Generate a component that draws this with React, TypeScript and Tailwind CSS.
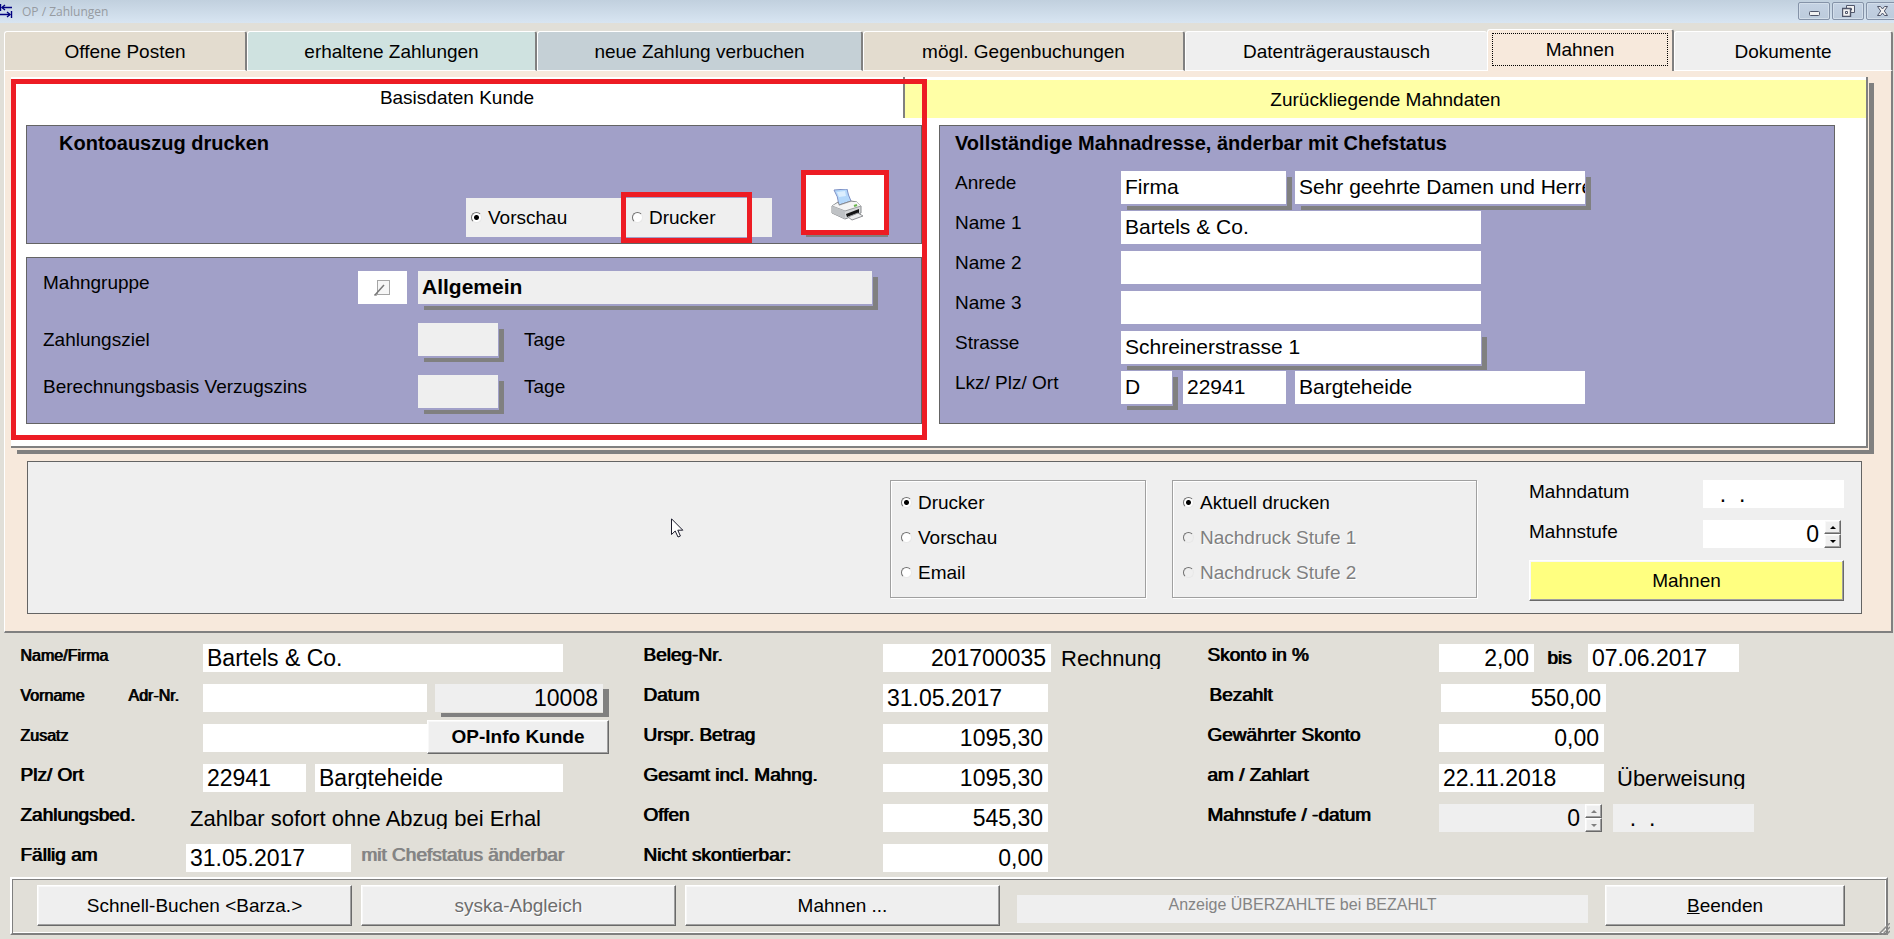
import type { InputHTMLAttributes, ReactNode } from "react";
import clsx from "clsx";

const tabs = [
  { name: "Offene Posten", color: "bg-[#e3dccf]" },
  { name: "erhaltene Zahlungen", color: "bg-[#cfe2e0]" },
  { name: "neue Zahlung verbuchen", color: "bg-[#c5d0d6]" },
  { name: "mögl. Gegenbuchungen", color: "bg-[#e3dccf]" },
  { name: "Datenträgeraustausch", color: "bg-[#efefef]" },
  { name: "Mahnen", color: "bg-[#f7e9dc]", active: true },
  { name: "Dokumente", color: "bg-[#efefef]" },
];

const panel = "border border-[#646464] bg-[#a1a0c8]";
const raised =
  "border border-t-white border-l-white border-r-[#696969] border-b-[#696969] bg-[#efefef] shadow-[inset_-1px_-1px_0_#a0a0a0,inset_1px_1px_0_#f8f8f8]";
const panelShadow = "shadow-[1px_2px_0_#a1a0c8,6px_6px_0_#808080]";
const heavy = "[text-shadow:1px_0_0_currentColor]";

type FieldProps = InputHTMLAttributes<HTMLInputElement>;

const Field = ({ className, ...props }: FieldProps) => (
  <input
    type="text"
    className={clsx("block h-[33px] pb-[2px] pl-1 text-[21px] outline-none", className)}
    {...props}
  />
);

// Low field of the lower form, the bottom border cuts the descenders
const LowField = ({ className, ...props }: FieldProps) => (
  <input
    type="text"
    className={clsx(
      "block h-7 border-b-[3px] pt-[3px] pr-[5px] pl-1 text-[23px] leading-[26px] outline-none",
      className
    )}
    {...props}
  />
);

const LowText = ({ children }: { children: ReactNode }) => (
  <output className="block h-[25px] overflow-hidden pt-[2px] pl-1 text-[22px] leading-[26px] whitespace-nowrap">
    {children}
  </output>
);

const LowLabel = ({ id, children, className }: { id?: string; children: ReactNode; className: string }) => (
  <label htmlFor={id} className={clsx("shrink-0 whitespace-nowrap", heavy, className)}>
    {children}
  </label>
);

const Radio = ({ name, label, checked, disabled }: { name: string; label: string; checked?: boolean; disabled?: boolean }) => (
  <label className={clsx("flex items-center gap-[6px]", disabled && "text-[#7f7f7f] [text-shadow:1px_1px_0_#fff]")}>
    <input
      type="radio"
      name={name}
      defaultChecked={checked}
      disabled={disabled}
      className="h-[11px] w-[11px] shrink-0 appearance-none rounded-full border border-t-[#707070] border-r-[#e8e8e8] border-b-[#e8e8e8] border-l-[#707070] bg-white checked:bg-[radial-gradient(circle,#000_2px,#fff_3px)] disabled:bg-[#efefef]"
    />
    {label}
  </label>
);

const Spinner = ({ disabled }: { disabled?: boolean }) => (
  <div className="flex h-7 w-[17px] flex-col">
    {["M0 3 L3 0 L6 3Z", "M0 0 L3 3 L6 0Z"].map((d, i) => (
      <button
        key={d}
        disabled={disabled}
        aria-label={i === 0 ? "Mehr" : "Weniger"}
        className={clsx("flex flex-1 items-center justify-center", raised)}
      >
        <svg width="6" height="3" viewBox="0 0 6 3">
          <path d={d} fill={disabled ? "#808080" : "#000"} />
        </svg>
      </button>
    ))}
  </div>
);

const PrinterIcon = () => (
  <svg width="32" height="32" viewBox="0 0 32 32">
    <path d="M3 1 L16 0 Q17 6 20 12 L8 16 Q7 7 3 1Z" fill="#b4d8fb" stroke="#7d8fc4" />
    <path d="M6 3 L14 2 L15 7 L8 8Z" fill="#dceefe" />
    <path d="M1 17 L7 13 L8 16 L20 12 L26 13 L30 17 L30 24 L14 30 L1 24Z" fill="#d5d7d9" stroke="#8a8c8f" />
    <path d="M1 17 L7 14 L8 17 L20 13 L26 13 L30 17 L14 22Z" fill="#f5f5f5" />
    <path d="M1 17 L14 22 L30 17" fill="none" stroke="#9a9c9f" />
    <path d="M14 22 L14 30 L1 24 L1 17Z" fill="#bfc2c5" />
    <path d="M15 25 L28 20 L28 24 L16 28Z" fill="#151515" />
    <path d="M17 28 L27 24 L32 27 L21 31Z" fill="#eceded" stroke="#909295" />
    <path d="M23 17 L26 16" stroke="#69b54c" strokeWidth="2" />
  </svg>
);

const TitleBar = () => (
  <header className="flex h-[23px] overflow-hidden bg-linear-to-b from-[#c1d0de] to-[#d8e5f2]">
    <svg className="mt-[4px]" width="13" height="15" viewBox="0 0 13 15" fill="none" stroke="#000080">
      <path d="M0.5 0 V7 M2 3.5 H12 M11.5 7 V14 M0 10.5 H10" strokeWidth="1.4" />
      <path d="M5 1 L2 3.5 L5 6 M7 8 L10 10.5 L7 13" strokeWidth="1.4" />
    </svg>
    <h1 className="ml-[9px] font-['Open_Sans',sans-serif] text-[12px] leading-[24px] text-[#969ba1]">OP / Zahlungen</h1>
    <div className="mt-[2px] -mr-1 ml-auto flex gap-[2px]">
      {["min", "restore", "close"].map((kind) => (
        <button
          key={kind}
          aria-label={kind}
          className="flex h-[18px] w-8 items-center justify-center rounded-[2px] border border-[#8593a8] bg-linear-to-b from-[#c4d2e3] to-[#bccbdc] shadow-[inset_0_0_0_1px_#d3deea]"
        >
          <svg width="13" height="12" viewBox="0 0 13 12" fill="#f2f2f2" stroke="#50566a">
            {kind === "min" && <rect x="1.5" y="6.5" width="10" height="4" rx="1" />}
            {kind === "restore" && (
              <>
                <path d="M4.5 0.5 H12.5 V7.5 H4.5Z M7.5 3.5 H9.5 V5 H7.5Z" />
                <path d="M0.5 3.5 H8.5 V11.5 H0.5Z" strokeWidth="1.4" />
                <path d="M3.5 6.5 H5.5 V8.5 H3.5Z" />
              </>
            )}
            {kind === "close" && (
              <path d="M1.5 1.5 H4.5 L6.5 4 L8.5 1.5 H11.5 L8.3 6 L11.5 10.5 H8.5 L6.5 8 L4.5 10.5 H1.5 L4.7 6Z" />
            )}
          </svg>
        </button>
      ))}
    </div>
  </header>
);

const CustomerPanels = () => (
  <div className="flex flex-col gap-[13px]">
    {/* Kontoauszug */}
    <section className={clsx("flex flex-col justify-between pt-[5px] pr-[33px] pb-[6px] pl-8", panel)}>
      <h2 className="text-[20px] leading-6 font-bold">Kontoauszug drucken</h2>
      <div className="mt-5 flex items-end justify-end gap-[34px]">
        <div className="flex h-[39px] w-[306px] bg-[#efefef] pl-[5px]">
          <div className="flex w-[161px]">
            <Radio name="auszug" label="Vorschau" checked />
          </div>
          <div className="relative flex">
            <Radio name="auszug" label="Drucker" />
            <div className="pointer-events-none absolute -top-[6px] -bottom-[6px] -left-[11px] w-[131px] border-[5px] border-[#ed1c24]" />
          </div>
        </div>
        <button aria-label="Kontoauszug drucken" className="relative flex h-[62px] w-[82px] items-center justify-center border-r border-b-2 border-[#808080] bg-white">
          <PrinterIcon />
          <span className="pointer-events-none absolute -top-[5px] -right-[2px] bottom-0 -left-[5px] border-[5px] border-[#ed1c24]" />
        </button>
      </div>
    </section>

    {/* Mahngruppe */}
    <section className={clsx("flex flex-1 flex-col gap-[19px] pt-[13px] pr-[49px] pl-4", panel)}>
      <div className="flex items-start">
        <label htmlFor="gruppe" className="w-[315px]">Mahngruppe</label>
        <button aria-label="Mahngruppe ändern" className="mr-[11px] flex h-[33px] w-[49px] items-center justify-center bg-white">
          <svg width="17" height="17" viewBox="0 0 17 17">
            <rect x="3.5" y="1.5" width="12" height="14" fill="#f6f6f6" stroke="#a5a5a5" />
            <path d="M1 16 L10 6" stroke="#777" strokeWidth="1.5" />
            <path d="M0 16 H3" stroke="#777" />
          </svg>
        </button>
        <Field id="gruppe" defaultValue="Allgemein" className={clsx("min-w-0 flex-1 bg-[#efefef] font-bold", panelShadow)} />
      </div>
      <div className="flex items-center">
        <label htmlFor="ziel" className="w-[375px]">Zahlungsziel</label>
        <Field id="ziel" className={clsx("mr-[26px] w-20 bg-[#efefef]", panelShadow)} />
        <span>Tage</span>
      </div>
      <div className="flex items-start">
        <label htmlFor="zins" className="w-[375px]">Berechnungsbasis Verzugszins</label>
        <Field id="zins" className={clsx("mr-[26px] w-20 bg-[#efefef]", panelShadow)} />
        <span>Tage</span>
      </div>
    </section>
  </div>
);

const AddressRow = ({ id, label, children }: { id: string; label: string; children: ReactNode }) => (
  <div className="flex items-start">
    <label htmlFor={id} className="w-[166px] shrink-0">{label}</label>
    {children}
  </div>
);

const AddressPanel = () => (
  <section className={clsx("pt-[5px] pb-[19px] pl-[15px]", panel)}>
    <h2 className="mb-4 text-[20px] leading-6 font-bold">Vollständige Mahnadresse, änderbar mit Chefstatus</h2>
    <div className="flex flex-col gap-[7px]">
      <AddressRow id="anrede" label="Anrede">
        <Field id="anrede" defaultValue="Firma" className={clsx("mr-[9px] w-[165px] bg-white", panelShadow)} />
        <Field aria-label="Briefanrede" defaultValue="Sehr geehrte Damen und Herren" className={clsx("w-[290px] bg-white", panelShadow)} />
      </AddressRow>
      <AddressRow id="name1" label="Name 1">
        <Field id="name1" defaultValue="Bartels & Co." className="w-[360px] bg-white" />
      </AddressRow>
      <AddressRow id="name2" label="Name 2">
        <Field id="name2" className="w-[360px] bg-white" />
      </AddressRow>
      <AddressRow id="name3" label="Name 3">
        <Field id="name3" className="w-[360px] bg-white" />
      </AddressRow>
      <AddressRow id="strasse" label="Strasse">
        <Field id="strasse" defaultValue="Schreinerstrasse 1" className={clsx("w-[360px] bg-white", panelShadow)} />
      </AddressRow>
      <AddressRow id="lkz" label="Lkz/ Plz/ Ort">
        <Field id="lkz" defaultValue="D" className={clsx("mr-[11px] w-[51px] bg-white", panelShadow)} />
        <Field aria-label="Plz" defaultValue="22941" className="mr-[9px] w-[103px] bg-white" />
        <Field aria-label="Ort" defaultValue="Bargteheide" className="w-[290px] bg-white" />
      </AddressRow>
    </div>
  </section>
);

const PrintOptions = () => (
  <section className="relative mt-[13px] mr-[29px] ml-[22px] flex items-start justify-end border border-[#646464] bg-[#efefef] pt-[18px] pr-[17px] pb-3">
    <svg className="absolute top-[56px] left-[643px]" width="13" height="20" viewBox="0 0 13 20">
      <path d="M0.5 0.8 V16.5 L4.2 13 L7 19 L9.4 18 L6.8 12.2 H11.8Z" fill="#fff" stroke="#1b1b2b" />
    </svg>
    <div className="mr-[26px] flex w-64 flex-col border border-[#a0a0a0] pt-1 pb-[7px] pl-[10px] shadow-[inset_1px_1px_0_#fff,1px_1px_0_#fff] *:h-[35px]">
      <Radio name="ausgabe" label="Drucker" checked />
      <Radio name="ausgabe" label="Vorschau" />
      <Radio name="ausgabe" label="Email" />
    </div>
    <div className="mr-[52px] flex w-[305px] flex-col border border-[#a0a0a0] pt-1 pb-[7px] pl-[10px] shadow-[inset_1px_1px_0_#fff,1px_1px_0_#fff] *:h-[35px]">
      <Radio name="stufe" label="Aktuell drucken" checked />
      <Radio name="stufe" label="Nachdruck Stufe 1" disabled />
      <Radio name="stufe" label="Nachdruck Stufe 2" disabled />
    </div>
    <div className="flex w-[315px] flex-col gap-3">
      <div className="flex items-start">
        <label htmlFor="mahndatum" className="w-[174px]">Mahndatum</label>
        <LowField id="mahndatum" defaultValue="  .  ." className="w-[141px] border-white bg-white" />
      </div>
      <div className="flex items-start">
        <label htmlFor="mahnstufe" className="w-[174px]">Mahnstufe</label>
        <LowField id="mahnstufe" defaultValue="0" className="w-[121px] border-white bg-white text-right" />
        <Spinner />
      </div>
      <button className={clsx("h-[41px] bg-[#ffff80]!", raised)}>Mahnen</button>
    </div>
  </section>
);

const white = "border-white bg-white";
const grey = "border-[#efefef] bg-[#efefef]";
const small = "text-base leading-6";
const normal = "leading-[22px]";

const ReceiptForm = () => (
  <section className="grid grid-cols-[623fr_564fr_687fr] pt-[11px] pl-5">
    {/* Kunde */}
    <div className="flex flex-col gap-3 *:flex *:h-7 *:items-start">
      <div>
        <LowLabel id="firma" className={clsx("w-[183px]", small)}>Name/Firma</LowLabel>
        <LowField id="firma" defaultValue="Bartels & Co." className={clsx("w-[360px]", white)} />
      </div>
      <div>
        <LowLabel id="vorname" className={clsx("w-[108px]", small)}>Vorname</LowLabel>
        <LowLabel id="adrnr" className={clsx("w-[75px]", small)}>Adr-Nr.</LowLabel>
        <LowField id="vorname" className={clsx("mr-2 w-56", white)} />
        <LowField id="adrnr" defaultValue="10008" className={clsx("w-[168px] text-right shadow-[0_1px_0_#e1dfd8,6px_5px_0_#808080]", grey)} />
      </div>
      <div>
        <LowLabel id="zusatz" className={clsx("w-[183px]", small)}>Zusatz</LowLabel>
        <LowField id="zusatz" className={clsx("w-56", white)} />
        <button className={clsx("relative -mt-1 h-[34px] w-[182px] font-bold", raised)}>OP-Info Kunde</button>
      </div>
      <div>
        <LowLabel id="plz" className={clsx("w-[183px]", normal)}>Plz/ Ort</LowLabel>
        <LowField id="plz" defaultValue="22941" className={clsx("mr-[9px] w-[103px]", white)} />
        <LowField aria-label="Ort" defaultValue="Bargteheide" className={clsx("w-[248px]", white)} />
      </div>
      <div>
        <LowLabel className={clsx("w-[166px]", normal)}>Zahlungsbed.</LowLabel>
        <LowText>Zahlbar sofort ohne Abzug bei Erhal</LowText>
      </div>
      <div>
        <LowLabel id="faellig" className={clsx("w-[166px]", normal)}>Fällig am</LowLabel>
        <LowField id="faellig" defaultValue="31.05.2017" className={clsx("mr-[10px] w-[165px]", white)} />
        <span className={clsx("text-[#848484]", heavy, normal)}>mit Chefstatus änderbar</span>
      </div>
    </div>

    {/* Beleg */}
    <div className="flex flex-col gap-3 *:flex *:h-7 *:items-start">
      <div>
        <LowLabel id="beleg" className={clsx("w-60", normal)}>Beleg-Nr.</LowLabel>
        <LowField id="beleg" defaultValue="201700035" className={clsx("mr-[6px] w-[168px] text-right", white)} />
        <LowText>Rechnung</LowText>
      </div>
      <div>
        <LowLabel id="datum" className={clsx("w-60", normal)}>Datum</LowLabel>
        <LowField id="datum" defaultValue="31.05.2017" className={clsx("w-[165px]", white)} />
      </div>
      {[
        ["Urspr. Betrag", "1095,30"],
        ["Gesamt incl. Mahng.", "1095,30"],
        ["Offen", "545,30"],
        ["Nicht skontierbar:", "0,00"],
      ].map(([label, value]) => (
        <div key={label}>
          <LowLabel id={label} className={clsx("w-60", normal)}>{label}</LowLabel>
          <LowField id={label} defaultValue={value} className={clsx("w-[165px] text-right", white)} />
        </div>
      ))}
    </div>

    {/* Zahlung */}
    <div className="flex flex-col gap-3 *:flex *:h-7 *:items-start">
      <div>
        <LowLabel id="skonto" className={clsx("w-[232px]", normal)}>Skonto in %</LowLabel>
        <LowField id="skonto" defaultValue="2,00" className={clsx("w-[95px] text-right", white)} />
        <LowLabel id="bis" className="w-[54px] pl-[13px] leading-7">bis</LowLabel>
        <LowField id="bis" defaultValue="07.06.2017" className={clsx("w-[151px]", white)} />
      </div>
      <div className="pl-[2px]">
        <LowLabel id="bezahlt" className={clsx("w-[232px]", normal)}>Bezahlt</LowLabel>
        <LowField id="bezahlt" defaultValue="550,00" className={clsx("w-[165px] text-right", white)} />
      </div>
      <div>
        <LowLabel id="gskonto" className={clsx("w-[232px]", normal)}>Gewährter Skonto</LowLabel>
        <LowField id="gskonto" defaultValue="0,00" className={clsx("w-[165px] text-right", white)} />
      </div>
      <div>
        <LowLabel id="zahlart" className={clsx("w-[232px]", normal)}>am / Zahlart</LowLabel>
        <LowField id="zahlart" defaultValue="22.11.2018" className={clsx("mr-[9px] w-[165px]", white)} />
        <LowText>Überweisung</LowText>
      </div>
      <div>
        <LowLabel id="mstufe" className={clsx("w-[232px]", normal)}>Mahnstufe / -datum</LowLabel>
        <LowField id="mstufe" defaultValue="0" className={clsx("w-[146px] text-right", grey)} />
        <Spinner disabled />
        <LowField aria-label="Mahndatum" defaultValue="  .  ." className={clsx("ml-[11px] w-[141px]", grey)} />
      </div>
    </div>
  </section>
);

const Footer = () => (
  <footer className="relative mt-[5px] mr-[6px] ml-[10px] flex gap-[9px] border-2 border-t-white border-r-[#7f7f7f] border-b-[#7f7f7f] border-l-white pt-[6px] pr-[41px] pb-[7px] pl-[25px] shadow-[inset_1px_1px_0_#7f7f7f,inset_-1px_-1px_0_#fff]">
    <button className={clsx("h-[41px] w-[315px]", raised)}>Schnell-Buchen &lt;Barza.&gt;</button>
    <button disabled className={clsx("h-[41px] w-[315px] text-[#6d6d6d] [text-shadow:1px_1px_0_#fff]", raised)}>
      syska-Abgleich
    </button>
    <button className={clsx("h-[41px] w-[315px]", raised)}>Mahnen ...</button>
    <button disabled className="mx-2 mt-[10px] flex h-7 flex-1 justify-center bg-[#efefef] text-base leading-[19px] text-[#848484]">
      Anzeige ÜBERZAHLTE bei BEZAHLT
    </button>
    <button className={clsx("h-[41px] w-60", raised)}>
      <u>B</u>eenden
    </button>
    <svg className="absolute -right-1 -bottom-[2px]" width="12" height="12" viewBox="0 0 12 12" stroke="#8a8a8a" strokeWidth="1.5">
      <path d="M0 12 L12 0 M4 12 L12 4 M8 12 L12 8" />
    </svg>
  </footer>
);

export default function App() {
  return (
    <div className="min-h-screen overflow-hidden bg-[#e1dfd8] font-['Liberation_Sans',Arial,sans-serif] text-[19px] leading-6 text-black">
      <TitleBar />

      <nav className="mt-[6px] mr-px ml-1 grid grid-cols-[243fr_290fr_326fr_322fr_302fr_187fr_219fr] items-end">
        {tabs.map((tab) => (
          <button
            key={tab.name}
            className={clsx(
              "rounded-t-[3px] border-t border-l border-t-white border-l-white",
              tab.color,
              tab.active
                ? "h-[42px] border-r-2 border-r-[#808080] px-1 pt-[2px] pb-[5px]"
                : "h-10 border-b border-b-white pt-[2px]",
              !tab.active && tab.name !== "Datenträgeraustausch" && "border-r-2 border-r-[#808080]"
            )}
          >
            {tab.active ? <span className="block h-[33px] border border-dotted border-black leading-[31px]">{tab.name}</span> : tab.name}
          </button>
        ))}
      </nav>

      <main className="mr-px ml-1 border-r-2 border-b-2 border-l border-r-[#808080] border-b-[#808080] border-l-white bg-[#f7e9dc] pt-[6px] pb-[17px]">
        <div className="relative mr-[23px] ml-[6px] border-r-2 border-b-2 border-[#808080] bg-white pb-[22px] shadow-[1px_2px_0_#f7e9dc,6px_6px_0_#808080]">
          <div className="grid grid-cols-[894fr_961fr] items-end">
            <button className="h-[41px] border-r-2 border-[#808080]">Basisdaten Kunde</button>
            <button className="h-[39px] border-t border-white bg-[#ffffa6] pt-[2px]">Zurückliegende Mahndaten</button>
          </div>
          <div className="grid grid-cols-2 gap-[17px] pt-[7px] pr-[31px] pl-[15px]">
            <CustomerPanels />
            <AddressPanel />
          </div>
          <div className="pointer-events-none absolute top-[2px] right-1/2 bottom-[6px] left-0 mr-[12px] border-[5px] border-[#ed1c24]" />
        </div>
        <PrintOptions />
      </main>

      <ReceiptForm />
      <Footer />
    </div>
  );
}
